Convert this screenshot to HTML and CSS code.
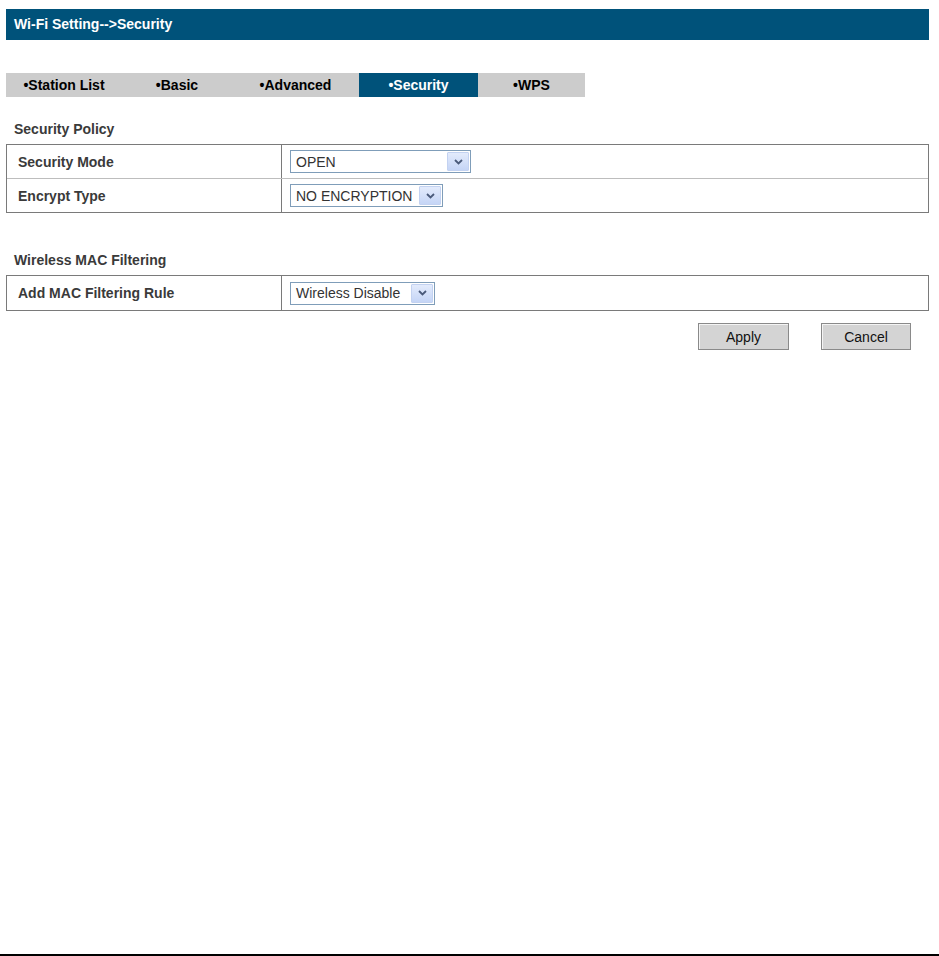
FILE: index.html
```html
<!DOCTYPE html>
<html>
<head>
<meta charset="utf-8">
<link rel="stylesheet" href="styles.css">
</head>
<body>
<div class="page">
  <div class="header">Wi-Fi Setting--&gt;Security</div>
  <div class="tabs">
    <div class="tab w1">&bull;Station List</div>
    <div class="tab w2">&bull;Basic</div>
    <div class="tab w3">&bull;Advanced</div>
    <div class="tab w4 active">&bull;Security</div>
    <div class="tab w5">&bull;WPS</div>
  </div>

  <div class="section-title">Security Policy</div>
  <div class="table">
    <div class="row">
      <div class="label">Security Mode</div>
      <div class="value">
        <div class="select s1"><span class="sel-text">OPEN</span><span class="arrow"><svg width="9" height="6" viewBox="0 0 9 6"><path d="M1 1 L4.5 4.5 L8 1" fill="none" stroke="#4a5a7a" stroke-width="1.8"/></svg></span></div>
      </div>
    </div>
    <div class="row">
      <div class="label">Encrypt Type</div>
      <div class="value">
        <div class="select s2"><span class="sel-text">NO ENCRYPTION</span><span class="arrow"><svg width="9" height="6" viewBox="0 0 9 6"><path d="M1 1 L4.5 4.5 L8 1" fill="none" stroke="#4a5a7a" stroke-width="1.8"/></svg></span></div>
      </div>
    </div>
  </div>

  <div class="section-title second">Wireless MAC Filtering</div>
  <div class="table">
    <div class="row tall">
      <div class="label">Add MAC Filtering Rule</div>
      <div class="value">
        <div class="select s3"><span class="sel-text">Wireless Disable</span><span class="arrow"><svg width="9" height="6" viewBox="0 0 9 6"><path d="M1 1 L4.5 4.5 L8 1" fill="none" stroke="#4a5a7a" stroke-width="1.8"/></svg></span></div>
      </div>
    </div>
  </div>

  <div class="buttons">
    <button class="btn apply">Apply</button>
    <button class="btn cancel">Cancel</button>
  </div>
</div>
</body>
</html>
```

FILE: styles.css
```css
html, body {
  margin: 0;
  padding: 0;
  background: #ffffff;
}
body {
  font-family: "Liberation Sans", Arial, sans-serif;
}
.page {
  height: 956px;
  box-sizing: border-box;
  border-bottom: 2px solid #000000;
  padding: 9px 10px 0 6px;
  width: 939px;
  overflow: hidden;
}
.header {
  height: 31px;
  line-height: 31px;
  background: #00527a;
  color: #ffffff;
  font-weight: bold;
  font-size: 14px;
  padding-left: 8px;
}
.tabs {
  display: flex;
  margin-top: 33px;
  height: 24px;
}
.tab {
  background: #cccccc;
  color: #000000;
  font-weight: bold;
  font-size: 14px;
  line-height: 24px;
  text-align: center;
}
.tab.active {
  background: #00527a;
  color: #ffffff;
}
.w1 { width: 116px; }
.w2 { width: 110px; }
.w3 { width: 127px; }
.w4 { width: 119px; }
.w5 { width: 107px; }

.section-title {
  height: 27px;
  line-height: 25px;
  margin-top: 20px;
  padding-left: 8px;
  font-weight: bold;
  font-size: 14px;
  color: #3a3a3a;
}
.section-title.second {
  margin-top: 35px;
}
.table {
  border: 1px solid #7a7a7a;
}
.row {
  display: flex;
  height: 33px;
}
.row.tall {
  height: 34px;
}
.row + .row {
  border-top: 1px solid #bdbdbd;
}
.label {
  width: 275px;
  border-right: 1px solid #7a7a7a;
  padding-left: 11px;
  box-sizing: border-box;
  font-weight: bold;
  font-size: 14px;
  color: #3a3a3a;
  display: flex;
  align-items: center;
}
.value {
  flex: 1;
  display: flex;
  align-items: center;
  padding-left: 8px;
}
.select {
  display: flex;
  align-items: center;
  justify-content: space-between;
  height: 23px;
  box-sizing: border-box;
  border: 1px solid #7f9db9;
  background: #ffffff;
  padding: 0 1px 0 5px;
  font-size: 14px;
  color: #333333;
}
.s1 { width: 181px; }
.s2 { width: 153px; }
.s3 { width: 145px; }
.sel-text {
  white-space: nowrap;
}
.arrow {
  display: flex;
  align-items: center;
  justify-content: center;
  width: 22px;
  height: 19px;
  box-sizing: border-box;
  border: 1px solid #c3d2f1;
  background: linear-gradient(#e3ebfc, #c5d5f6);
  border-radius: 1px;
}
.buttons {
  display: flex;
  margin-top: 12px;
  padding-left: 692px;
}
.btn {
  height: 27px;
  background: #d4d4d4;
  border: 1px solid #8a8a8a;
  box-shadow: inset 1px 1px 0 #f4f4f4;
  font-family: "Liberation Sans", Arial, sans-serif;
  font-size: 14px;
  color: #111111;
  padding: 0;
}
.apply { width: 91px; }
.cancel { width: 90px; margin-left: 32px; }
```
